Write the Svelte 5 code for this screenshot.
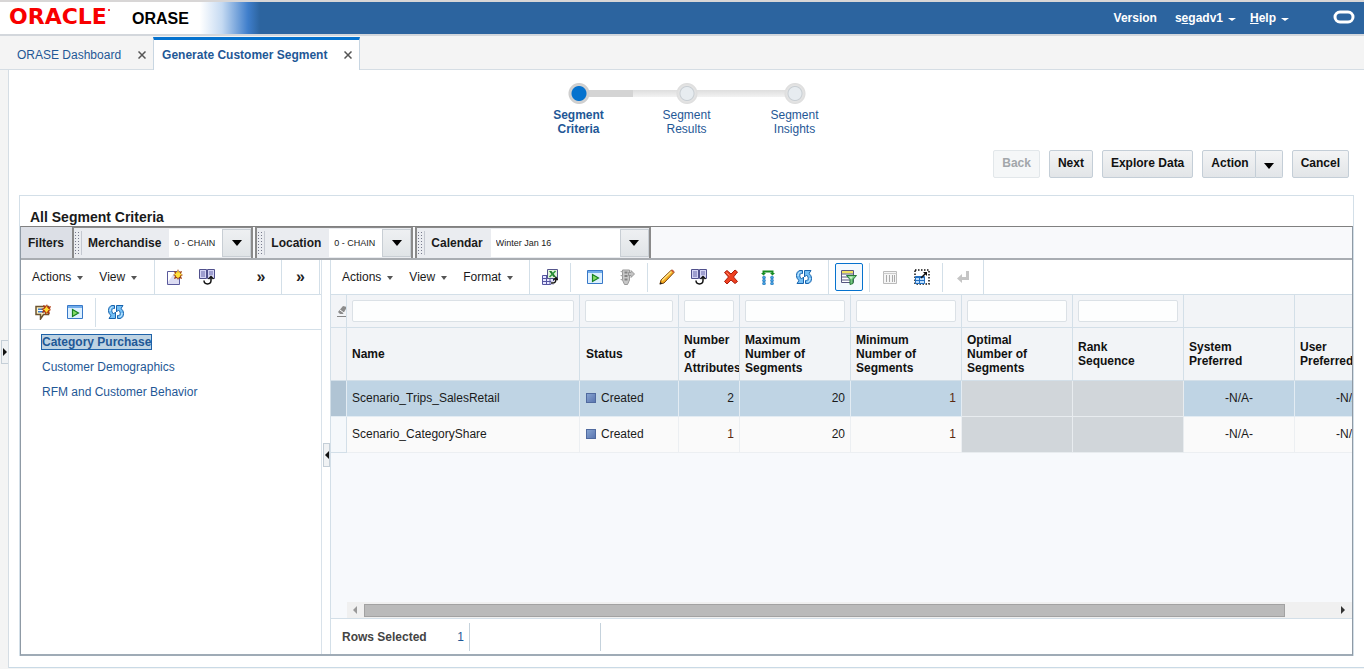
<script lang="ts">
  const steps = [
    { label: 'Segment Criteria', active: true },
    { label: 'Segment Results', active: false },
    { label: 'Segment Insights', active: false }
  ];

  const filters = [
    { id: 'merchandise', label: 'Merchandise', value: '0 - CHAIN', wide: false },
    { id: 'location', label: 'Location', value: '0 - CHAIN', wide: false },
    { id: 'calendar', label: 'Calendar', value: 'Winter Jan 16', wide: true }
  ];

  const categories = ['Category Purchase', 'Customer Demographics', 'RFM and Customer Behavior'];
  let category = $state(0);

  const columns = [
    { label: 'Name', filter: true },
    { label: 'Status', filter: true },
    { label: 'Number of Attributes', filter: true },
    { label: 'Maximum Number of Segments', filter: true },
    { label: 'Minimum Number of Segments', filter: true },
    { label: 'Optimal Number of Segments', filter: true },
    { label: 'Rank Sequence', filter: true },
    { label: 'System Preferred', filter: false },
    { label: 'User Preferred', filter: false }
  ];

  const rows = [
    { name: 'Scenario_Trips_SalesRetail', status: 'Created', attributes: 2, max: 20, min: 1 },
    { name: 'Scenario_CategoryShare', status: 'Created', attributes: 1, max: 20, min: 1 }
  ];
  let selected = $state(0);
</script>

{#snippet icon(name: string)}
  <svg class="icon" viewBox="0 0 16 16" aria-hidden="true">
    {#if name === 'new'}
      <path d="M.5 2.500h12v13H.5z" fill="#dcdcf2" stroke="#5a5a9c" />
      <path d="M1 3h7L1 13z" fill="#fff" />
      <path d="M11 0l1 3 3-1-1 3 2 1-2 1 1 3-3-1-1 2-1-2-3 1 1-3-2-1 2-1-1-3 3 1z" fill="#9c3c0c" />
      <path d="M11 2v7M7.500 5.500h7M9 3.500l4 4M13 3.500l-4 4" stroke="#ffe23c" stroke-width="1.400" />
    {:else if name === 'duplicate'}
      <path d="M.5.5h7v9h-7zM8.500.5h7v9h-7z" fill="#d4d4f4" stroke="#50508c" />
      <path d="M2 3h4M2 5h4M2 7h4M10 3h4M10 5h4" stroke="#6868aa" />
      <path d="M5 11c0 5 7 5 7 0V8" fill="none" stroke="#fff" stroke-width="4" />
      <path d="M5 11.500c0 4.500 7 4.500 7 0V8M9.500 10L12 7.500 14.500 10" fill="none" stroke="#111" stroke-width="1.500" />
    {:else if name === 'comment'}
      <path d="M1 2.500h12.500v8h-5L5.500 15v-4.500H1z" fill="#fff2c0" stroke="#6b5330" stroke-width="1.500" />
      <path d="M3 4.500h7v4H3z" fill="#3c7fd0" /><path d="M3 6.500h7" stroke="#fff" />
      <path d="M12 0l1 3 3-1-1 3 1 1-2 1 1 3-3-1-2 2v-3l-3 1 1-3-2-1 3-1-1-3 3 1z" fill="#b23a10" />
      <path d="M11.500 2.500v6M8.500 5.500h6M10 4l3 3M13 4l-3 3" stroke="#ffdc32" stroke-width="1.200" />
    {:else if name === 'run'}
      <path d="M.5 1.500h15v13H.5z" fill="#ddf0ff" stroke="#3878c8" />
      <path d="M1 2h14v2H1z" fill="#71acea" />
      <path d="M5.500 5.500v7l6-3.500z" fill="#85dc68" stroke="#168020" stroke-width="1.200" />
    {:else if name === 'refresh'}
      <path d="M6.500 1.500H4C1.500 2 .5 4 .5 6.500c0 2 1 4 2.500 5L1 14.500h6.500V8L5.500 10C4 8.500 3.500 7 4 5.500c.3-.8 1-1 2.500-1z" fill="#74bff5" stroke="#1763ad" />
      <path d="M9.500 14.500H12c2.500-.5 3.500-2.500 3.500-5 0-2-1-4-2.500-5l2-3H8.500V8l2-2c1.500 1.500 2 3 1.500 4.500-.3.800-1 1-2.500 1z" fill="#74bff5" stroke="#1763ad" />
      <path d="M2 7c0-2 .7-3.500 2.500-4M14 9c0 2-.7 3.500-2.500 4" fill="none" stroke="#d8f2ff" />
    {:else if name === 'excel'}
      <path d="M.5 6.500h11v9H.5zM1 9.500h11M1 12.500h11M4.500 7v8M8 7v8" fill="#e6e6ff" stroke="#5555a0" />
      <path d="M5.500.5h10v9h-10z" fill="#e2f5dc" stroke="#55558c" />
      <path d="M7 2h2.500l4.500 6h-2.500z" fill="#217a2d" /><path d="M13.500 2L7.500 8" stroke="#2f9b3c" stroke-width="1.600" />
      <path d="M9 14c4 .5 5-1 5-4.500" fill="none" stroke="#fff" stroke-width="3.500" />
      <path d="M9 14c4 .5 5-1 5-4.500M11.500 11L14 8.500l2 2.500" fill="none" stroke="#111" stroke-width="1.500" />
    {:else if name === 'traffic'}
      <path d="M3.500 1h7v10l-2 4.500h-3l-2-4.500z" fill="#c8c8c8" stroke="#999" />
      <path d="M1 2h2.500v2zM1 6h2.500v2zM1 10h2.500v2z" fill="#aaa" />
      <path d="M5.500 3.500h3M5.500 7h3M5.500 10.500h3" stroke="#858585" stroke-width="2" />
      <path d="M9.500 3.500H12V1.500L15.500 5 12 8.500v-2H9.500z" fill="#c4c4c4" stroke="#8c8c8c" stroke-width=".8" />
    {:else if name === 'edit'}
      <path d="M1 15l1-4L12.500 1l2.500 2.500L5 14z" fill="#f6ad22" stroke="#79430c" />
      <path d="M3 11.500L12.500 2.500" stroke="#ffe78a" stroke-width="1.200" />
      <path d="M12 1.500L13.500.5 15.500 2.500 14.500 4z" fill="#c95b38" /><path d="M.5 15.500l1-2.500 2 1.500z" fill="#222" />
    {:else if name === 'delete'}
      <path d="M1.500 3.500L4 1.500 8 5l4-4 2.500 2-4 5 4 4.500L12 14.500 8 11l-4 4-2.500-2.500L5.500 8z" fill="#ef4020" stroke="#a91d0c" />
      <path d="M3.500 3.500l3 3" stroke="#ff9272" />
    {:else if name === 'assign'}
      <path d="M3.500 4V2.500h9V4" fill="none" stroke="#188c22" stroke-width="2" />
      <path d="M1 4h5L3.500 6.500zM10 4h5l-2.500 2.500z" fill="#188c22" />
      {#each [4, 12] as cx}
        {#each [8.500, 11.500, 14.500] as cy}
          <circle {cx} {cy} r="1.500" fill="#3ea1e4" stroke="#1c63a6" stroke-width=".5" />
        {/each}
      {/each}
    {:else if name === 'query'}
      <path d="M.5 1.500h12v12H.5z" fill="#fff" stroke="#555580" />
      <path d="M1 2h11v2.500H1z" fill="#efe060" />
      <path d="M1 5h12M1 8h12M1 11h12" stroke="#555580" />
      <path d="M5.500 6.500h10l-3.500 4v4l-3 1v-5z" fill="#75c884" stroke="#277b38" /><path d="M8 7.500h4l-2 3z" fill="#c9f4c9" />
    {:else if name === 'freeze'}
      <path d="M1.500 2.500h13v12h-13z" fill="#f5f5f5" stroke="#bbb" /><path d="M1.500 4.500h13" stroke="#ccc" />
      <path d="M4.500 6v7M7.500 6v7M10.500 6v7M12.500 6v7" stroke="#aaa" />
    {:else if name === 'detach'}
      <path d="M1 1h14v14H1z" fill="none" stroke="#111" stroke-width="1.500" stroke-dasharray="1.500 1.500" />
      <path d="M1.500 7.500h9v7h-9z" fill="#bfe0ff" stroke="#236fc0" /><path d="M1.500 8.500h9M5.500 9v6M2 11.500h8" stroke="#236fc0" />
      <path d="M7 9l5-5" stroke="#111" stroke-width="1.500" /><path d="M9 3h4v4z" fill="#111" />
    {:else if name === 'wrap'}
      <path d="M11 2h3v9H7v3L2 9.500 7 5v3h4z" fill="#c5c5c5" />
    {:else if name === 'eraser'}
      <path d="M5 9l5-6 4 1-4 7H7z" fill="#8c8c8c" /><path d="M7 7l4 3" stroke="#fff" /><path d="M4 13.500h9" stroke="#888" />
    {/if}
  </svg>
{/snippet}

{#snippet tool(name: string, label: string, disabled = false)}
  <button class="tool" type="button" aria-label={label} {disabled}>{@render icon(name)}</button>
{/snippet}

{#snippet menu(label: string)}
  <button class="menu" type="button">{label}<span class="caret"></span></button>
{/snippet}

<div class="page">
  <header class="banner">
    <div class="brand">
      <span class="logo">ORACLE<span class="mark"></span></span>
      <span class="product">ORASE</span>
    </div>
    <nav class="links">
      <a href="#version">Version</a>
      <button type="button">s<u>e</u>gadv1<span class="caret"></span></button>
      <button type="button"><u>H</u>elp<span class="caret"></span></button>
      <svg class="ring" viewBox="0 0 22 14" aria-hidden="true"><rect x="2" y="2" width="18" height="10" rx="5" fill="none" stroke="#fff" stroke-width="3" /></svg>
    </nav>
  </header>

  <nav class="tabs">
    <div class="tab">
      <a href="#dashboard">ORASE Dashboard</a>
      <button type="button" aria-label="Close ORASE Dashboard"><svg viewBox="0 0 8 8"><path d="M.5.5l7 7M7.500.5l-7 7" /></svg></button>
    </div>
    <div class="tab current">
      <a href="#segment">Generate Customer Segment</a>
      <button type="button" aria-label="Close Generate Customer Segment"><svg viewBox="0 0 8 8"><path d="M.5.5l7 7M7.500.5l-7 7" /></svg></button>
    </div>
  </nav>

  <div class="stage">
    <div class="gutter"><button class="collapse" type="button" aria-label="Expand side panel"><span class="right"></span></button></div>
    <main>
      <ol class="train">
        {#each steps as step}
          <li class:active={step.active}>
            <span class="stop"></span>
            <a href="#step">{step.label}</a>
          </li>
        {/each}
      </ol>

      <div class="actions">
        <button class="push" type="button" disabled>Back</button>
        <button class="push" type="button">Next</button>
        <button class="push" type="button">Explore Data</button>
        <span class="split">
          <button class="push" type="button">Action</button>
          <button class="push drop" type="button" aria-label="More actions"><span class="triangle"></span></button>
        </span>
        <button class="push" type="button">Cancel</button>
      </div>

      <section class="panel">
        <h1>All Segment Criteria</h1>
        <div class="frame">
          <div class="filterbar">
            <span class="title">Filters</span>
            {#each filters as f}
              <div class="filter">
                <span class="grip"></span>
                <label for={f.id}>{f.label}</label>
                <span class="combo" class:wide={f.wide}>
                  <select id={f.id}><option>{f.value}</option></select>
                  <span class="open"><span class="triangle"></span></span>
                </span>
              </div>
            {/each}
          </div>

          <div class="panes">
            <aside>
              <div class="toolbar">
                <div class="menus narrow">{@render menu('Actions')}{@render menu('View')}</div>
                <div class="group grow">
                  {@render tool('new', 'Create')}{@render tool('duplicate', 'Duplicate')}
                  <button class="more" type="button" aria-label="More tools">»</button>
                </div>
                <div class="group last"><button class="more" type="button" aria-label="More toolbars">»</button></div>
              </div>
              <div class="toolbar">
                <div class="group pair">{@render tool('comment', 'Add comment')}{@render tool('run', 'Run')}</div>
                <div class="group open-end">{@render tool('refresh', 'Refresh')}</div>
              </div>
              <ul>
                {#each categories as c, i}
                  <li><a href="#category" class:chosen={category === i} onclick={() => (category = i)}>{c}</a></li>
                {/each}
              </ul>
            </aside>

            <div class="splitter"><button class="collapse" type="button" aria-label="Collapse list"><span class="left"></span></button></div>

            <div class="grid">
              <div class="toolbar">
                <div class="menus">{@render menu('Actions')}{@render menu('View')}{@render menu('Format')}</div>
                <div class="group">{@render tool('excel', 'Export to Excel')}</div>
                <div class="group roomy">{@render tool('run', 'Run')}{@render tool('traffic', 'Status', true)}</div>
                <div class="group edits full">
                  {@render tool('edit', 'Edit')}{@render tool('duplicate', 'Duplicate')}{@render tool('delete', 'Delete')}
                  <span class="spread">{@render tool('assign', 'Assign')}{@render tool('refresh', 'Refresh')}</span>
                </div>
                <div class="group on">{@render tool('query', 'Query by example')}</div>
                <div class="group">{@render tool('freeze', 'Freeze', true)}{@render tool('detach', 'Detach')}</div>
                <div class="group full">{@render tool('wrap', 'Wrap', true)}</div>
              </div>

              <div class="scroller">
                <table>
                  <colgroup>
                    <col class="c-head" /><col class="c-name" /><col class="c-status" /><col class="c-attr" />
                    {#each [1, 2, 3, 4, 5, 6] as n (n)}<col class="c-num" />{/each}
                  </colgroup>
                  <thead>
                    <tr class="search">
                      <td class="erase">{@render icon('eraser')}</td>
                      {#each columns as c}
                        <td>{#if c.filter}<input type="text" aria-label={'Filter ' + c.label} />{/if}</td>
                      {/each}
                    </tr>
                    <tr class="heads">
                      <th></th>
                      {#each columns as c}<th scope="col">{c.label}</th>{/each}
                    </tr>
                  </thead>
                  <tbody>
                    {#each rows as r, i}
                      <tr class:selected={selected === i} onclick={() => (selected = i)}>
                        <td class="rowhead"></td>
                        <td>{r.name}</td>
                        <td><span class="dot"></span>{r.status}</td>
                        <td class="num" class:warm={r.attributes === 1}>{r.attributes}</td>
                        <td class="num">{r.max}</td>
                        <td class="num" class:warm={r.min === 1}>{r.min}</td>
                        <td class="blank"></td>
                        <td class="blank"></td>
                        <td class="mid">-N/A-</td>
                        <td class="mid">-N/A-</td>
                      </tr>
                    {/each}
                  </tbody>
                </table>
              </div>
              <div class="hbar"><span class="left"></span><span class="track"><span class="thumb"></span></span><span class="right"></span></div>
              <div class="status">
                <span class="count"><b>Rows Selected</b><span>1</span></span>
                <span class="cell"></span>
              </div>
            </div>
          </div>
        </div>
      </section>
    </main>
  </div>
</div>

<style>
  :global(body) { background: #f4f4f4; }
  .page, .page * { box-sizing: border-box; }
  .page {
    min-height: 100vh;
    display: flex;
    flex-direction: column;
    font: 12px/14px "Liberation Sans", Arial, sans-serif;
    color: #1a1a1a;
    overflow: hidden;
  }
  button, input, select { font: inherit; color: inherit; margin: 0; padding: 0; }
  button { background: none; border: 0; white-space: nowrap; }
  a { color: #1f5896; text-decoration: none; }
  .icon { width: 16px; height: 16px; display: block; }

  .banner {
    height: 36px;
    display: flex;
    justify-content: space-between;
    background: #2c649f;
    border-top: 2px solid #d8d6d6;
    border-bottom: 2px solid #d3d7dc;
  }
  .brand {
    width: 262px;
    display: flex;
    align-items: center;
    gap: 15px;
    padding-left: 9px;
    background: linear-gradient(90deg, #fff 200px, #c5daf2 222px, #3f7ecb 248px, #2c649f 260px);
  }
  .logo { display: flex; width: 108px; font: bold 22px/24px "DejaVu Sans", sans-serif; color: #f80000; padding-bottom: 2px; }
  .mark { width: 2px; height: 2px; margin: 4px 0 0 1px; border-radius: 1px; background: currentColor; }
  .product { font-size: 16px; font-weight: bold; color: #000; padding-top: 1px; }
  .links { display: flex; align-items: center; gap: 14px; padding-right: 9px; color: #fff; font-weight: bold; }
  .links a { color: #fff; margin-right: 4px; }
  .links button { display: flex; align-items: center; }
  .ring { width: 22px; height: 14px; margin: 0 0 3px 30px; }
  .caret { display: inline-block; border: 3px solid transparent; border-top: 3px solid currentColor; border-bottom: 0; margin-left: 6px; }
  .links .caret { margin-top: 2px; border-width: 3px 4px 0; margin-left: 5px; }

  .tabs { display: flex; height: 34px; padding-left: 9px; background: #f4f4f4; box-shadow: inset 0 -1px #d5dde4; }
  .tab { display: flex; align-items: center; gap: 17px; padding: 4px 7px 0 8px; height: 34px; }
  .tab.current { background: #fff; border: 1px solid #c8d6e2; border-top: 3px solid #0572ce; border-bottom: 0; font-weight: bold; margin-top: 1px; padding-top: 0; height: 33px; }
  .tab svg { width: 8px; height: 8px; display: block; fill: none; stroke: #555; stroke-width: 1.5; }

  .stage { flex: 1; display: flex; padding-bottom: 1px; }
  .gutter { width: 9px; border-right: 1px solid #d5dde4; display: flex; justify-content: flex-end; align-items: center; padding-bottom: 34px; }
  .collapse { width: 7px; height: 24px; display: flex; align-items: center; justify-content: center; background: #f0f2f4; border: 1px solid #c4ced7; }
  .gutter .collapse { border-right: 0; }
  .right { border: 4px solid transparent; border-left: 4px solid #111; border-right: 0; }
  .left { border: 4px solid transparent; border-right: 4px solid #111; border-left: 0; }
  main { flex: 1; min-width: 0; display: flex; flex-direction: column; background: #fff; padding: 12px 10px 11px; border-bottom: 1px solid #c9dae6; }

  .train { display: flex; justify-content: center; list-style: none; margin: 0; padding: 0; }
  .train li { width: 108px; display: flex; flex-direction: column; align-items: center; text-align: center; }
  .train a { width: 64px; margin-top: 3px; }
  .train .active a { font-weight: bold; }
  .stop {
    width: 100%;
    height: 23px;
    background:
      radial-gradient(circle at center, #e7ecf0 6px, #c8ced3 7px, #e4e4e4 8px, #dedede 10px, transparent 11px),
      linear-gradient(#dedede, #f2f2f2) center / 100% 7px no-repeat;
  }
  .train .active .stop {
    background:
      radial-gradient(circle at center, #0572ce 6px, #0572ce 7px, #d2d2d2 8px, #cecece 10px, transparent 11px),
      linear-gradient(#d4d4d4, #d4d4d4) right / 50% 7px no-repeat;
  }
  .train li:last-child .stop {
    background:
      radial-gradient(circle at center, #e7ecf0 6px, #c8ced3 7px, #e4e4e4 8px, #dedede 10px, transparent 11px),
      linear-gradient(#dedede, #f2f2f2) left / 50% 7px no-repeat;
  }

  .actions { display: flex; justify-content: flex-end; gap: 9px; margin: 14px 5px 17px 0; }
  .push { height: 28px; padding: 0 8px 3px; font-weight: bold; color: #111; background: linear-gradient(#f3f4f5, #e2e5e8); border: 1px solid #c4ced7; border-radius: 2px; }
  .push:disabled { color: #a2a6aa; background: #f5f7f8; border-color: #e2e7ea; }
  .split { display: flex; }
  .split .push:first-child { border-radius: 2px 0 0 2px; padding-right: 6px; }
  .split .drop { border-left: 0; border-radius: 0 2px 2px 0; width: 27px; }
  .triangle { display: inline-block; border: 5px solid transparent; border-top: 6px solid #000; border-bottom: 0; }
  .drop .triangle { vertical-align: -2px; }

  .panel { flex: 1; display: flex; flex-direction: column; border: 1px solid #d3dfe8; border-bottom: 0; }
  h1 { margin: 0; font-size: 14px; line-height: 16px; padding: 13px 10px 1px; }
  .frame { flex: 1; display: flex; flex-direction: column; border: 1px solid #8f9aa5; border-top: 1px solid #808080; border-bottom: 2px solid #9fabb6; }

  .filterbar { display: flex; height: 33px; border-bottom: 2px solid #a9adb2; background: #f8f9fb; gap: 2px; }
  .title { display: flex; align-items: center; width: 51px; padding-left: 7px; margin-right: -2px; font-weight: bold; background: #dcdfe6; }
  .filter { display: flex; align-items: center; background: #eaecf0; border: 2px solid #8a8a8a; border-width: 1px 2px 0 2px; font-weight: bold; }
  .grip { width: 8px; height: 24px; background: radial-gradient(#77798c 1px, transparent 1px) 0 0 / 3px 3px; border-right: 1px solid #c4c8d0; margin-right: 6px; }
  .filter label { padding-right: 8px; }
  .combo { position: relative; width: 82px; height: 28px; }
  .combo.wide { width: 158px; }
  select { width: 100%; height: 28px; appearance: none; border: 0; border-radius: 0; background: #fff; font-size: 9px; font-weight: normal; padding-left: 5px; }
  .open { position: absolute; top: 0; right: 0; width: 29px; height: 28px; display: flex; align-items: center; justify-content: center; background: linear-gradient(#eef0f2, #e0e4e7); border: 1px solid #c8ced4; pointer-events: none; }

  .panes { flex: 1; display: flex; min-width: 0; }
  aside { width: 301px; border-right: 1px solid #d9e2ea; }
  .splitter { width: 8px; display: flex; align-items: center; justify-content: flex-end; padding-bottom: 5px; }
  .toolbar { height: 35px; display: flex; align-items: center; border-bottom: 1px solid #d3dfe8; }
  .menus { display: flex; height: 100%; align-items: center; gap: 16px; padding-left: 11px; border-right: 1px solid #d3dfe8; width: 199px; }
  .menus.narrow { width: 134px; }
  .menu { display: flex; align-items: center; }
  .menu .caret { border-width: 4px 3px 0; border-top-color: #555; margin-top: 2px; }
  .group { display: flex; align-items: center; height: 29px; padding: 0 4px; border-right: 1px solid #d3dfe8; }
  .group.full { height: 100%; }
  .group.grow { flex: 1; height: 100%; }
  .group.last { height: 100%; width: 38px; margin-right: 1px; justify-content: center; }
  .group.pair { padding: 0 4px 0 6px; }
  .group.open-end { border: 0; }
  .group.roomy { padding: 0 4px 0 8px; }
  .group.edits { padding: 0 5px 0 3px; width: 181px; }
  .tool { width: 32px; height: 28px; display: flex; align-items: center; justify-content: center; }
  .spread { display: flex; margin-left: 3px; }
  .spread .tool { width: 36px; }
  .group.on { padding: 0 6px; }
  .on .tool { width: 28px; border: 1px solid #0572ce; border-radius: 2px; background: #f4f9fe; }
  .more { font-size: 16px; font-weight: bold; width: 20px; color: #222; padding-bottom: 1px; }
  .grow .more { margin-left: auto; margin-right: 6px; }

  ul { list-style: none; margin: 0; padding: 0 21px; }
  ul li { height: 25px; line-height: 25px; }
  .chosen { font-weight: bold; background: #bed3e3; outline: 1px solid #1f62a8; }

  .grid { flex: 1; min-width: 0; display: flex; flex-direction: column; border-left: 1px solid #d3dfe8; background: #f7f9fc; }
  .grid .toolbar, .status { background: #fff; }
  .scroller { flex: 1; overflow: hidden; }
  table { table-layout: fixed; width: 1075px; border-collapse: separate; border-spacing: 0; }
  .c-head { width: 16px; }
  .c-name { width: 233px; }
  .c-status { width: 99px; }
  .c-attr { width: 61px; }
  .c-num { width: 111px; }
  th, td { padding: 0 5px; text-align: left; overflow: hidden; border-right: 1px solid #d3dfe8; border-bottom: 1px solid #d3dfe8; }
  thead { background: #f2f4f7; }
  .search td { height: 33px; }
  .search .erase { padding: 0 0 0 2px; }
  .search input { display: block; width: 100%; height: 22px; background: #fdfefe; border: 1px solid #dbe1e6; border-radius: 2px; }
  .heads th { height: 53px; color: #111; }
  .heads th:nth-child(n + 5) { padding-right: 26px; }
  tbody td { height: 36px; padding-bottom: 2px; background: #fafafa; border-color: #eceff2; white-space: nowrap; }
  tbody td:nth-child(3), .heads th:nth-child(3) { padding-left: 6px; }
  tbody .rowhead { background: #f5f8fb; border-color: #d3dfe8; }
  tbody .selected td { background: #bfd4e4; border-color: #e3ecf3; }
  tbody .selected .rowhead { background: #b0c4d4; }
  tbody tr .blank, tbody .selected .blank { background: #d1d6da; border-color: #e8ecef; }
  .num { text-align: right; }
  .warm { color: #5a2a10; }
  .mid { text-align: center; }
  .dot { display: inline-block; width: 10px; height: 10px; margin-right: 5px; vertical-align: -1px; background: linear-gradient(135deg, #86a3d0, #5b76b0); border: 1px solid #506a9f; }

  .hbar { display: flex; align-items: center; height: 16px; margin-left: 16px; padding: 0 7px 0 6px; background: #f0f0f0; }
  .hbar .left { border-right-color: #999; }
  .track { flex: 1; padding: 0 56px 0 7px; }
  .thumb { display: block; height: 13px; background: #bababa; border: 1px solid #a2a2a2; }
  .hbar .right { border-left-color: #333; }
  .status { height: 36px; display: flex; align-items: center; border-top: 1px solid #d3dfe8; }
  .count { display: flex; justify-content: space-between; align-items: center; width: 139px; height: 28px; padding: 0 5px 0 11px; border-right: 1px solid #c5d2dc; color: #444; }
  .count span { color: #1f5896; }
  .cell { width: 131px; height: 28px; border-right: 1px solid #c5d2dc; }
</style>
